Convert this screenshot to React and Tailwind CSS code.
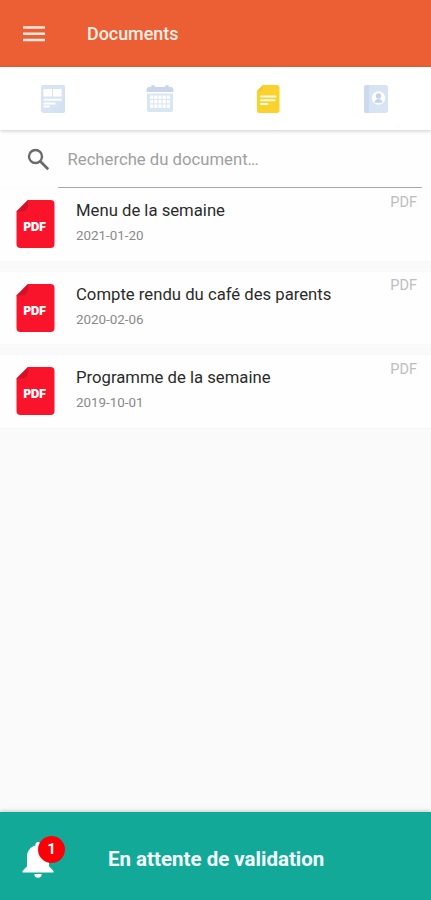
import { useState } from 'react';

const documents = [
  { id: 1, title: 'Menu de la semaine', date: '2021-01-20', type: 'PDF' },
  { id: 2, title: 'Compte rendu du café des parents', date: '2020-02-06', type: 'PDF' },
  { id: 3, title: 'Programme de la semaine', date: '2019-10-01', type: 'PDF' },
];

function NewsIcon() {
  return (
    <svg width="28" height="30" viewBox="0 0 28 30">
      <rect x="2" y="1" width="24" height="28" rx="2" fill="#d8e4f3" />
      <rect x="4.500" y="5" width="8.500" height="7.500" fill="#fff" />
      <rect x="14" y="5" width="8.500" height="7.500" fill="#fff" />
      <path d="M4.500 15.800h18M4.500 19.500h12M4.500 22.500h6" stroke="#fff" strokeWidth="2" />
      <path d="M24 1a2 2 0 0 1 2 2v24a2 2 0 0 1-2 2H12l12-12z" fill="#c9d8ed" opacity=".25" />
    </svg>
  );
}

function CalendarIcon() {
  return (
    <svg width="28" height="30" viewBox="0 0 28 30">
      <path d="M.5 8V6a3 3 0 0 1 3-3H5a2 2 0 0 1 4 0h10a2 2 0 0 1 4 0h1.500a3 3 0 0 1 3 3v2z" fill="#ccd5ea" />
      <path d="M1 9.500h26V26a2 2 0 0 1-2 2H3a2 2 0 0 1-2-2z" fill="#d8e5f3" />
      <g fill="#fff">
        {[11.5, 16, 20.5].map(y =>
          [4, 8.2, 12.4, 16.6, 20.8].map(x => <rect key={`${x}-${y}`} x={x} y={y} width="3.2" height="3.4" />)
        )}
      </g>
    </svg>
  );
}

function NoteIcon() {
  return (
    <svg width="28" height="30" viewBox="0 0 28 30">
      <path d="M9 1h14a2.500 2.500 0 0 1 2.500 2.500v23A2.500 2.500 0 0 1 23 29H5.500A2.500 2.500 0 0 1 3 26.500V7z" fill="#fad22d" />
      <path d="M3 7l6-6v4a2 2 0 0 1-2 2z" fill="#f3c829" />
      <path d="M7 12.500h14.500M7 16.300h13.500M7 20h6.500" stroke="#fffbe6" strokeWidth="2" strokeLinecap="round" />
    </svg>
  );
}

function ContactsIcon() {
  return (
    <svg width="28" height="30" viewBox="0 0 28 30">
      <rect x="2" y="1" width="24" height="28" rx="2.500" fill="#d8e4f3" />
      <path d="M4.500 1H7v28H4.500A2.500 2.500 0 0 1 2 26.500v-23A2.500 2.500 0 0 1 4.500 1z" fill="#cddaeb" />
      <circle cx="16.500" cy="14" r="6.700" fill="#fff" />
      <circle cx="16.500" cy="12" r="2.700" fill="#c5d3e7" />
      <path d="M12.500 18.800c0-2.500 1.800-3.800 4-3.800s4 1.300 4 3.800z" fill="#c5d3e7" />
    </svg>
  );
}

function PdfIcon() {
  return (
    <svg width="39" height="48" viewBox="0 0 39 48" className="shrink-0">
      <path d="M12 0h22.500a4 4 0 0 1 4 4v40a4 4 0 0 1-4 4H4.500a4 4 0 0 1-4-4V11.500z" fill="#fa142b" />
      <path d="M.5 11.500L12 0v5.500a6 6 0 0 1-6 6z" fill="#d3122a" />
      <text x="18.700" y="31" textAnchor="middle" fill="#fff" className="font-['Inter',sans-serif] text-[11.500px] font-black">PDF</text>
    </svg>
  );
}

const tabs = [
  { name: 'Actualités', Icon: NewsIcon },
  { name: 'Calendrier', Icon: CalendarIcon },
  { name: 'Documents', Icon: NoteIcon },
  { name: 'Contacts', Icon: ContactsIcon },
];

export default function App() {
  const [search, setSearch] = useState('');
  const list = documents.filter(d => d.title.toLowerCase().includes(search.toLowerCase()));

  return (
    <div className="flex h-screen flex-col overflow-hidden bg-[#fafafa] font-['Roboto',sans-serif]">
      <header className="flex h-[67px] shrink-0 items-center bg-[#ec5f34] pl-[22px]">
        <button aria-label="Menu">
          <svg width="24" height="20" viewBox="0 0 24 20" className="block">
            <path d="M1 3.500h22M1 9.800h22M1 16h22" stroke="#fde9df" strokeWidth="2.500" />
          </svg>
        </button>
        <h1 className="pl-[41px] text-[17.900px] leading-6 font-medium text-[#fff1e9]">Documents</h1>
      </header>

      <nav className="relative grid h-[63px] shrink-0 grid-cols-4 bg-white shadow-[0_1px_4px_rgba(0,0,0,0.2)]">
        {tabs.map(({ name, Icon }) => (
          <button key={name} aria-label={name} className="flex items-center justify-center pr-[2.500px] pt-[1px]"><Icon /></button>
        ))}
      </nav>

      <div className="flex h-[58px] shrink-0 bg-[#fefefe] pr-[9px] pl-[27px]">
        <svg width="24" height="24" viewBox="0 0 24 24" className="mt-[18px] shrink-0">
          <circle cx="8.500" cy="8.500" r="6.500" fill="none" stroke="#6a6a6a" strokeWidth="2.400" />
          <path d="M13 13l8.200 8.200" stroke="#6a6a6a" strokeWidth="2.700" />
        </svg>
        <input type="text" placeholder="Recherche du document…" value={search} onChange={e => setSearch(e.target.value)}
          className="ml-[7px] min-w-0 flex-1 border-b border-[#aaa] pt-[3px] pl-[9.500px] text-[16.700px] text-[#222] outline-none placeholder:text-[#a0a0a0]" />
      </div>

      <main className="flex flex-1 flex-col gap-[11px]">
        {list.map(doc => (
          <div key={doc.id} className="flex h-[72.670px] shrink-0 bg-[#fefefe] pt-3 pr-3.5 pl-[15.500px] shadow-[0_0_3px_rgba(0,0,0,0.02)]">
            <PdfIcon />
            <div className="ml-[21.500px] flex-1 pt-px">
              <h2 className="text-[16.700px] leading-5 text-[#2b2b2b]">{doc.title}</h2>
              <p className="mt-[6px] text-[13.400px] leading-[18px] text-[#8a8a8a]">{doc.date}</p>
            </div>
            <span className="-mt-[7.500px] text-[14.500px] leading-5 text-[#bdbdbd]">{doc.type}</span>
          </div>
        ))}
      </main>

      <footer className="flex h-[88px] shrink-0 items-center bg-[#13a999] pl-[22px] shadow-[0_-1px_4px_rgba(0,0,0,0.2)]">
        <div className="relative mt-[2px] h-[42px] w-[43px]">
          <svg width="32" height="36" viewBox="0 0 32 36" className="mt-[6px] block">
            <path d="M16 0c-1.500 0-2.500 1-2.500 2.400v1.100C8.500 4.800 5 9 5 14.500v9.800L.5 29v1.500h31V29L27 24.300v-9.800C27 9 23.500 4.800 18.500 3.500V2.400C18.500 1 17.500 0 16 0z" fill="#fff" />
            <path d="M12.300 32h7.400a3.700 3.700 0 0 1-7.400 0z" fill="#fff" />
          </svg>
          <span className="absolute top-0 right-0 flex size-[27px] items-center justify-center rounded-full bg-[#fb0007] text-[15px] font-bold text-white">1</span>
        </div>
        <p className="mt-[5px] ml-[43px] text-[20.500px] leading-6 font-bold text-[#f4fffd]">En attente de validation</p>
      </footer>
    </div>
  );
}
